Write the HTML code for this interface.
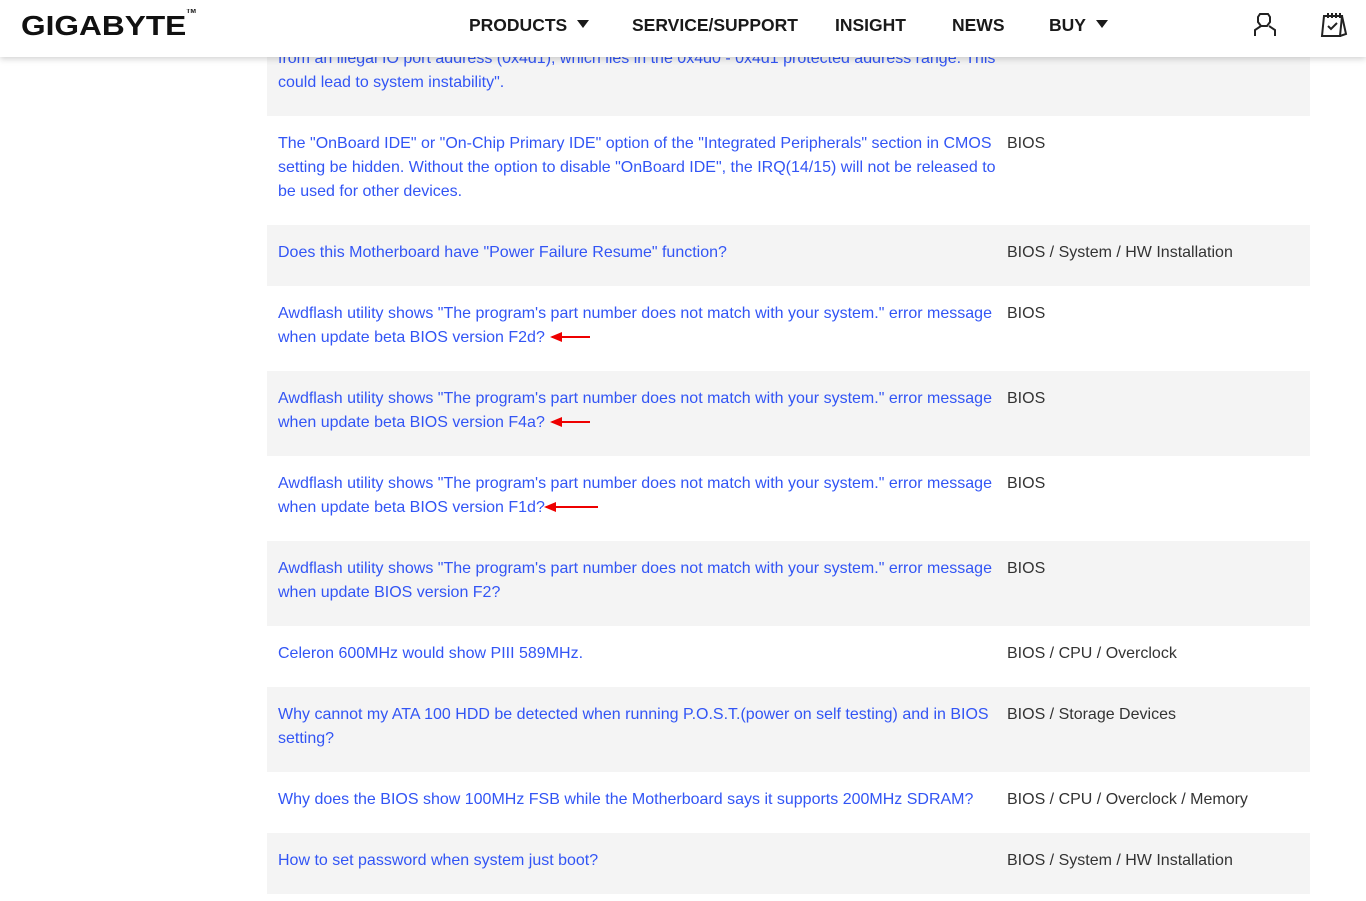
<!DOCTYPE html>
<html><head><meta charset="utf-8"><style>
*{margin:0;padding:0;box-sizing:border-box}
body{width:1366px;height:901px;overflow:hidden;background:#fff;font-family:"Liberation Sans",Arial,sans-serif;position:relative}
.hdr{position:absolute;left:0;top:0;width:1366px;height:57px;background:#fff;box-shadow:0 2px 6px rgba(0,0,0,.18);z-index:5}
.logo{position:absolute;left:21px;top:10px;font-size:28px;font-weight:900;letter-spacing:0;color:#111;transform:scaleX(1.13);transform-origin:left}
.logo sup{font-size:6px;position:relative;top:-12px;letter-spacing:0}
.nav{position:absolute;top:15px;font-size:17.5px;font-weight:bold;color:#1a1a1a}
.tri{display:inline-block;width:0;height:0;border-left:6px solid transparent;border-right:6px solid transparent;border-top:8px solid #1a1a1a;margin-left:10px;vertical-align:3px}
.tbl{position:absolute;left:267px;top:31px;width:1043px}
.r{display:flex;padding:16px 0 0 11px;font-size:16px;line-height:24px}
.r.g{background:#f4f4f4}
.q{width:729px;color:#3255f5;position:relative}
.c{color:#333;padding-left:0}
.h2{height:85px}.h3{height:109px}.h1{height:61px}
.ar{position:absolute}
</style></head><body>
<div class="hdr">
<div class="logo">GIGABYTE<sup>TM</sup></div>
<div class="nav" style="left:469px">PRODUCTS<span class="tri"></span></div>
<div class="nav" style="left:632px">SERVICE/SUPPORT</div>
<div class="nav" style="left:835px">INSIGHT</div>
<div class="nav" style="left:952px">NEWS</div>
<div class="nav" style="left:1049px">BUY<span class="tri"></span></div>
<svg style="position:absolute;left:1252px;top:11px" width="26" height="26" viewBox="0 0 26 26" fill="none" stroke="#222" stroke-width="2"><path d="M8 3h8l2 3v5l-3 4h-6l-3-4V6z"/><path d="M9 15l-6 4v6M17 15l6 4v6"/></svg>
<svg style="position:absolute;left:1320px;top:11px" width="28" height="26" viewBox="0 0 28 26" fill="none" stroke="#222" stroke-width="2"><path d="M4 5h18l-2 20H2z"/><path d="M22 5l4 18-6 2"/><path d="M8 2v5M12 2v5M16 2v5M20 2v5"/><path d="M8 15l3 3 6-6"/></svg>
</div>
<div class="tbl">
<div class="r g h2"><div class="q">from an illegal IO port address (0x4d1), which lies in the 0x4d0 - 0x4d1 protected address range. This<br>could lead to system instability".</div><div class="c"></div></div>
<div class="r h3"><div class="q">The "OnBoard IDE" or "On-Chip Primary IDE" option of the "Integrated Peripherals" section in CMOS setting be hidden. Without the option to disable "OnBoard IDE", the IRQ(14/15) will not be released to be used for other devices.</div><div class="c">BIOS</div></div>
<div class="r g h1"><div class="q">Does this Motherboard have "Power Failure Resume" function?</div><div class="c">BIOS / System / HW Installation</div></div>
<div class="r h2"><div class="q">Awdflash utility shows "The program's part number does not match with your system." error message when update beta BIOS version F2d?<svg class="ar" style="left:270px;top:28px" width="44" height="14"><path d="M4 7h38" stroke="#e00" stroke-width="2"/><path d="M2 7l12-5v10z" fill="#e00"/></svg></div><div class="c">BIOS</div></div>
<div class="r g h2"><div class="q">Awdflash utility shows "The program's part number does not match with your system." error message when update beta BIOS version F4a?<svg class="ar" style="left:270px;top:28px" width="44" height="14"><path d="M4 7h38" stroke="#e00" stroke-width="2"/><path d="M2 7l12-5v10z" fill="#e00"/></svg></div><div class="c">BIOS</div></div>
<div class="r h2"><div class="q">Awdflash utility shows "The program's part number does not match with your system." error message when update beta BIOS version F1d?<svg class="ar" style="left:264px;top:28px" width="56" height="14"><path d="M4 7h52" stroke="#e00" stroke-width="2"/><path d="M2 7l12-5v10z" fill="#e00"/></svg></div><div class="c">BIOS</div></div>
<div class="r g h2"><div class="q">Awdflash utility shows "The program's part number does not match with your system." error message when update BIOS version F2?</div><div class="c">BIOS</div></div>
<div class="r h1"><div class="q">Celeron 600MHz would show PIII 589MHz.</div><div class="c">BIOS / CPU / Overclock</div></div>
<div class="r g h2"><div class="q">Why cannot my ATA 100 HDD be detected when running P.O.S.T.(power on self testing) and in BIOS setting?</div><div class="c">BIOS / Storage Devices</div></div>
<div class="r h1"><div class="q">Why does the BIOS show 100MHz FSB while the Motherboard says it supports 200MHz SDRAM?</div><div class="c">BIOS / CPU / Overclock / Memory</div></div>
<div class="r g h1"><div class="q">How to set password when system just boot?</div><div class="c">BIOS / System / HW Installation</div></div>
</div>
</body></html>
